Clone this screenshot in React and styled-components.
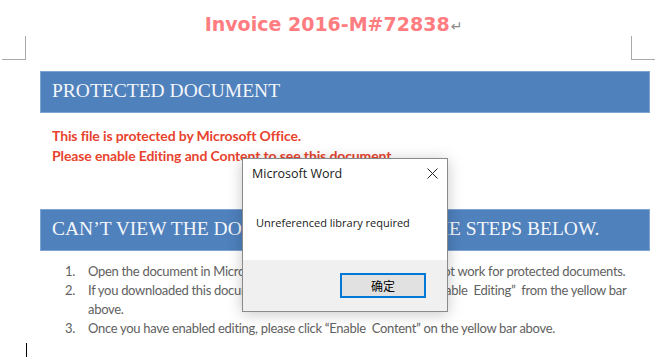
import React from 'react';
import styled, { createGlobalStyle } from 'styled-components';

const GlobalStyle = createGlobalStyle`
  html, body {
    margin: 0;
    padding: 0;
    background: #ffffff;
  }
  body {
    width: 655px;
    height: 357px;
    overflow: hidden;
    font-family: 'Liberation Sans', Arial, sans-serif;
  }
`;

const Page = styled.div`
  position: relative;
  width: 655px;
  height: 357px;
`;

const TitleRow = styled.div`
  padding-top: 13px;
  height: 23px;
  line-height: 23px;
  text-align: center;
  padding-left: 12px;
`;

const Title = styled.span`
  font-family: 'DejaVu Sans', Verdana, sans-serif;
  font-weight: bold;
  font-size: 19px;
  color: #ff7c80;
`;

const ParaMark = styled.span`
  font-family: 'DejaVu Sans', sans-serif;
  font-size: 14px;
  color: #8a8a8a;
  margin-left: 1px;
`;

const MarginRow = styled.div`
  display: flex;
  justify-content: space-between;
  height: 24px;
`;

const Corner = styled.div`
  width: 23px;
  height: 23px;
  border-bottom: 1px solid #a9a9a9;
  ${(p) => (p.$right
    ? 'border-left: 1px solid #a9a9a9;'
    : 'border-right: 1px solid #a9a9a9; margin-left: 2px;')}
`;

const Body = styled.div`
  margin-left: 40px;
  width: 610px;
`;

const Banner = styled.div`
  box-sizing: border-box;
  height: 42px;
  margin-top: ${(p) => p.$top}px;
  background: #4f81bd;
  border: 1px solid #7fa3d0;
  display: flex;
  align-items: center;
  padding: 0 0 3px 11px;
  font-family: 'Liberation Serif', 'Times New Roman', serif;
  font-size: 19.5px;
  color: #f4f6fa;
  white-space: nowrap;
`;

const Notice = styled.div`
  margin-top: 13px;
  padding-left: 12px;
  font-family: Lato, 'Liberation Sans', sans-serif;
  font-weight: bold;
  font-size: 14px;
  line-height: 19.5px;
  color: #e8432e;
  letter-spacing: -0.12px;
`;

const Steps = styled.div`
  margin-top: 11px;
  font-family: Lato, 'Liberation Sans', sans-serif;
  font-size: 13px;
  line-height: 19px;
  color: #616161;
  letter-spacing: -0.3px;
`;

const Step = styled.div`
  display: flex;
`;

const StepNum = styled.span`
  width: 23px;
  margin-left: 25px;
  flex: none;
`;

const StepText = styled.span`
  white-space: nowrap;
`;

const Caret = styled.div`
  width: 1px;
  height: 15px;
  background: #000000;
  margin: 5px 0 0 26px;
`;

const Dialog = styled.div`
  position: absolute;
  left: 242px;
  top: 158px;
  width: 206px;
  height: 154px;
  box-sizing: border-box;
  border: 1px solid #8a8a8a;
  background: #ffffff;
  box-shadow: 0 2px 14px rgba(0, 0, 0, 0.22);
  display: flex;
  flex-direction: column;
  font-family: 'Open Sans', 'Noto Sans', sans-serif;
  color: #1a1a1a;
`;

const DialogHead = styled.div`
  height: 29px;
  display: flex;
  align-items: center;
  justify-content: space-between;
  padding: 0 9px;
  font-size: 12.5px;
`;

const Message = styled.div`
  flex: 1;
  display: flex;
  align-items: center;
  padding: 0 0 4px 13px;
  font-size: 11px;
`;

const DialogFoot = styled.div`
  height: 51px;
  background: #f0f0f0;
  display: flex;
  justify-content: flex-end;
  align-items: flex-start;
  padding: 13px 21px 0 0;
  box-sizing: border-box;
`;

const OkButton = styled.button`
  width: 86px;
  height: 25px;
  box-sizing: border-box;
  border: 2px solid #0078d7;
  background: #e1e1e1;
  font-family: 'Noto Sans CJK SC', 'Noto Sans', sans-serif;
  font-size: 12px;
  color: #000000;
  padding: 0;
  line-height: 19px;
`;

const CloseIcon = () => (
  <svg width="11" height="11" viewBox="0 0 11 11">
    <path d="M0.5 0.5 L10.5 10.5 M10.5 0.5 L0.5 10.5" stroke="#222" strokeWidth="1" fill="none" />
  </svg>
);

export default function App() {
  return (
    <Page>
      <GlobalStyle />
      <TitleRow>
        <Title>Invoice 2016-M#72838</Title>
        <ParaMark>↵</ParaMark>
      </TitleRow>
      <MarginRow>
        <Corner />
        <Corner $right />
      </MarginRow>
      <Body>
        <Banner $top={11}>PROTECTED DOCUMENT</Banner>
        <Notice>
          This file is protected by Microsoft Office.
          <br />
          Please enable Editing and Content to see this document.
        </Notice>
        <Banner $top={44}>CAN’T VIEW THE DOCUMENT? FOLLOW THE STEPS BELOW.</Banner>
        <Steps>
          <Step>
            <StepNum>1.</StepNum>
            <StepText>Open the document in Microsoft Office. Previewing online does not work for protected documents.</StepText>
          </Step>
          <Step>
            <StepNum>2.</StepNum>
            <StepText>
              If you downloaded this document from your email, please click “Enable&nbsp; Editing”&nbsp; from the yellow bar
              <br />
              above.
            </StepText>
          </Step>
          <Step>
            <StepNum>3.</StepNum>
            <StepText>Once you have enabled editing, please click “Enable&nbsp; Content” on the yellow bar above.</StepText>
          </Step>
        </Steps>
      </Body>
      <Caret />
      <Dialog>
        <DialogHead>
          <span>Microsoft Word</span>
          <CloseIcon />
        </DialogHead>
        <Message>Unreferenced library required</Message>
        <DialogFoot>
          <OkButton>确定</OkButton>
        </DialogFoot>
      </Dialog>
    </Page>
  );
}
